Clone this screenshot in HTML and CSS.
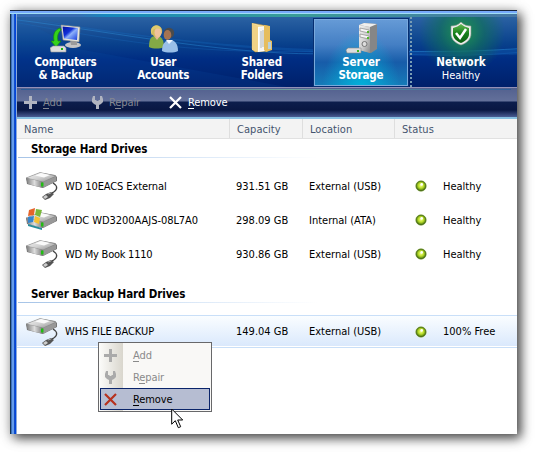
FILE: index.html
```html
<!DOCTYPE html>
<html lang="en">
<head>
<meta charset="utf-8">
<title>Server Storage</title>
<link rel="stylesheet" href="styles.css">
</head>
<body>
<svg class="defs" width="0" height="0">
  <defs>
    <linearGradient id="silver" x1="0" y1="0" x2="1" y2="1"><stop offset="0" stop-color="#f4f4f4"/><stop offset=".5" stop-color="#d2d2d2"/><stop offset="1" stop-color="#8b8b8b"/></linearGradient>
    <linearGradient id="front" x1="0" y1="0" x2="1" y2="0"><stop offset="0" stop-color="#777"/><stop offset=".5" stop-color="#ddd"/><stop offset="1" stop-color="#777"/></linearGradient>
    <linearGradient id="screen" x1="0" y1="0" x2="1" y2="1"><stop offset="0" stop-color="#0410a0"/><stop offset=".4" stop-color="#1030d8"/><stop offset=".55" stop-color="#8db0fa"/><stop offset="1" stop-color="#1238dc"/></linearGradient>
    <linearGradient id="folder" x1="0" y1="0" x2="1" y2="1"><stop offset="0" stop-color="#fff0b8"/><stop offset="1" stop-color="#dda93f"/></linearGradient>
    <linearGradient id="shield" x1="0" y1="0" x2="0" y2="1"><stop offset="0" stop-color="#63b954"/><stop offset=".5" stop-color="#168019"/><stop offset="1" stop-color="#0a5c12"/></linearGradient>
    <radialGradient id="orb" cx=".5" cy=".45" r=".55"><stop offset="0" stop-color="#f4ff8d"/><stop offset=".5" stop-color="#b8dc28"/><stop offset=".8" stop-color="#6c9718"/><stop offset="1" stop-color="#365c08"/></radialGradient>
    <symbol id="disk" viewBox="0 0 32 30">
      <path d="M0 7 14 1.5 29 4 31 6V10L17 17 1 13Z" fill="#777"/>
      <path d="M0 7 14 1.5 30 5 17 11Z" fill="url(#silver)" stroke="#8d8d8d" stroke-width=".5"/>
      <path d="M0 7 17 11V17L2 13Z" fill="url(#front)"/>
      <path d="M17 11 30 5.500V10L17 17Z" fill="#989898"/>
      <path d="M9 4.500 15 2 24 4 18 6.500Z" fill="#fafafa"/>
      <path d="M15 11.500h2.500v4h-2.500z" fill="#21bd12"/>
    </symbol>
    <symbol id="usb-drive" viewBox="0 0 32 30">
      <use href="#disk" width="32" height="30"/>
      <path d="M27 12c5 3 5 7-1 10" fill="none" stroke="#444" stroke-width="1.4"/>
      <path d="m16 26 4-3 5-2 3 2-4 4-5 2Z" fill="#555"/>
      <path d="m17 26 3-2 2 2-3 2Z" fill="#ccc"/><path d="m22 23 3-1" stroke="#aaa"/>
    </symbol>
    <symbol id="status" viewBox="0 0 12 12"><circle cx="6" cy="6" r="5.7" fill="#c9dda5"/><circle cx="6" cy="6" r="4.9" fill="url(#orb)" stroke="#496c13" stroke-width=".8"/><circle cx="6.7" cy="4.4" r="1.3" fill="#fff"/></symbol>
    <symbol id="plus" viewBox="0 0 13 13"><path d="M5 0h3v5h5v3H8v5H5V8H0V5h5z" fill="currentColor"/></symbol>
    <symbol id="wrench" viewBox="0 0 11 13"><path d="M1 0h2v4h1l1 1h1l1-1h1V0h2l1 3v3L9 8 7 9v4H4V9L2 8 0 6V3Z" fill="currentColor"/></symbol>
    <symbol id="cross" viewBox="0 0 13 13"><path d="m1 1 11 11M12 1 1 12" fill="none" stroke="currentColor" stroke-width="2.2"/></symbol>
  </defs>
</svg>

<main class="window">
  <nav class="nav">
    <svg class="waves" viewBox="0 0 500 73" preserveAspectRatio="none">
      <path d="M0 0C120 18 240 43 500 33V39C330 44 220 34 80 14Z" fill="#1b7bcf" opacity=".24"/>
      <path d="M0 3C100 16 220 42 320 38S430 38 500 33" fill="none" stroke="#2f97e3" opacity=".4"/>
      <path d="M0 6C70 18 150 37 270 36S410 45 500 37" fill="none" stroke="#1b77cc" opacity=".25"/>
      <path d="M60 33 270 73H0V0Z" fill="#1264bd" opacity=".12"/>
    </svg>
    <div class="tab">
      <svg class="pic" viewBox="0 0 32 32" width="32" height="32">
        <ellipse cx="23" cy="22" rx="8" ry="3" fill="#c5c5c5"/><path d="m20 17 7 1v4h-6z" fill="#9b9b9b"/>
        <path d="M11 2 30 4 29 19 13 17Z" fill="#e6e6db" stroke="#858585" stroke-width=".6"/>
        <path d="m12.5 3.5 15.5 1.5-1 12-13-1.5Z" fill="url(#screen)"/>
        <path d="M10 5C4 7 3 12 4 18H1l5 6 5-6H8c-1-5 0-8 3-11Z" fill="#34d21b" stroke="#188b08" stroke-width=".7"/>
        <path d="m0 25 3-2h11l2 2v4H1Z" fill="#ddd" stroke="#999" stroke-width=".6"/><path d="M11 25h2v2h-2z" fill="#1ab80a"/>
      </svg>
      <strong>Computers<br>&amp; Backup</strong>
    </div>
    <div class="tab">
      <svg class="pic" viewBox="0 0 32 32" width="32" height="32">
        <path d="M2 24c0-8 2-11 7-11s8 3 8 11c-4 2-11 2-15 0Z" fill="#83aa46"/>
        <path d="m7 13 3 4 3-4" fill="#e7b792"/><circle cx="9.5" cy="8" r="5.7" fill="#d3bd5d"/><ellipse cx="11" cy="9.5" rx="3.5" ry="4.8" fill="#efc29b"/><path d="M5 9c1-4 4-4 9-3-1-5-9-5-10 2v5Z" fill="#dfca6f"/>
        <path d="M15 28c0-7 3-11 8-11s8 4 8 11c-4 2-12 2-16 0Z" fill="#99bfe8"/>
        <path d="m19 17 3 4 4-4" fill="#f1f7ff"/><circle cx="22" cy="10" r="5.2" fill="#4b4b4b"/><ellipse cx="20.5" cy="12" rx="3.8" ry="5" fill="#a67351"/>
      </svg>
      <strong>User<br>Accounts</strong>
    </div>
    <div class="tab">
      <svg class="pic" viewBox="0 0 32 32" width="32" height="32">
        <path d="M6 0 22 3V28L9 29 6 26Z" fill="url(#folder)" stroke="#b88b32" stroke-width=".5"/>
        <path d="m12 4 8-1v25l-8 1Z" fill="#fff"/><path d="M14 9v18M16 7v20M18 9v17" stroke="#8d9499" stroke-width=".8"/>
        <path d="m18 2 6 1v14l2 1v9l-6 2-2-2Z" fill="#e6bd5c"/><path d="M6 0 12 3V29L6 27Z" fill="#f1d286"/>
        <path d="m13 5 5-1v23l-5 1Z" fill="#f5f5f2"/><path d="M15 8v17M17 7v17" stroke="#9aa0a4" stroke-width=".7"/>
        <path d="M22 19h3v7h-3z" fill="#b9d0da"/>
      </svg>
      <strong>Shared<br>Folders</strong>
    </div>
    <div class="tab active">
      <svg class="pic" viewBox="0 0 32 32" width="32" height="32">
        <path d="m14 2 5-2 13 1v25l-6 4-12-3Z" fill="#868686"/><path d="m14 2 11 2v26l-11-3Z" fill="url(#silver)"/><path d="m14 2 5-2 13 1-7 3Z" fill="#efefef"/>
        <path d="m15 5 9 2v3l-9-2Zm0 6 9 2v3l-9-2Z" fill="#f6f6f6" stroke="#8a8a8a" stroke-width=".7"/>
        <path d="M22 8h2v2h-2zm0 6h2v2h-2z" fill="#52b72c"/><circle cx="19.5" cy="21" r="2.5" fill="#ddd" stroke="#777"/>
        <path d="m1 27 2-2h13v5H2Z" fill="#ddd" stroke="#888" stroke-width=".6"/><path d="M12 27h2v2h-2z" fill="#3eb61e"/>
      </svg>
      <strong>Server<br>Storage</strong>
    </div>
    <div class="tab health">
      <svg class="pic" viewBox="0 0 32 32" width="32" height="32">
        <path d="M16 0c3 3 6 4 10 4v8c0 5-4 9-10 11C10 21 6 17 6 12V4c4 0 7-1 10-4Z" fill="#eee" stroke="#8b9b8b" stroke-width=".6"/>
        <path d="M16 2c2 2 5 3 8 4v6c0 4-3 7-8 9-5-2-8-5-8-9V6c3-1 6-2 8-4Z" fill="url(#shield)"/>
        <path d="m11 11 4 5 6-9" fill="none" stroke="#fff" stroke-width="2.5"/>
      </svg>
      <strong>Network</strong><span>Healthy</span>
    </div>
  </nav>

  <div class="toolbar">
    <span class="tool t-add off"><svg width="13" height="13"><use href="#plus"/></svg><span><u>A</u>dd</span></span>
    <span class="tool t-repair off"><svg width="11" height="13"><use href="#wrench"/></svg><span>R<u>e</u>pair</span></span>
    <span class="tool t-remove"><svg width="13" height="13"><use href="#cross"/></svg><span><u>R</u>emove</span></span>
  </div>

  <section class="content">
    <div class="head cols"><span>Name</span><span>Capacity</span><span>Location</span><span>Status</span></div>
    <h2>Storage Hard Drives</h2>
    <div class="rows">
      <div class="row cols"><span class="name"><svg width="32" height="30"><use href="#usb-drive"/></svg><span class="n1">WD 10EACS External</span></span><span>931.51 GB</span><span>External (USB)</span><span class="state"><svg width="12" height="12"><use href="#status"/></svg>Healthy</span></div>
      <div class="row cols"><span class="name"><svg viewBox="0 0 32 30" width="32" height="30"><g transform="translate(0 6)"><use href="#disk" width="32" height="30"/><path d="m2 13 14 4v2L2 15Z" fill="#278b9b"/></g><path d="m3 5 6-2-1 7-6 1Z" fill="#e5642a"/><path d="m10 4 6 1-2 7-5-2Z" fill="#79b83b"/><path d="m2 12 6-1-1 6-5 1Z" fill="#3685cc"/><path d="m9 11 5 2-1 6-5-2Z" fill="#f4c132"/></svg><span class="n2">WDC WD3200AAJS-08L7A0</span></span><span>298.09 GB</span><span>Internal (ATA)</span><span class="state"><svg width="12" height="12"><use href="#status"/></svg>Healthy</span></div>
      <div class="row cols"><span class="name"><svg width="32" height="30"><use href="#usb-drive"/></svg><span class="n3">WD My Book 1110</span></span><span>930.86 GB</span><span>External (USB)</span><span class="state"><svg width="12" height="12"><use href="#status"/></svg>Healthy</span></div>
    </div>
    <h2 class="backup">Server Backup Hard Drives</h2>
    <div class="row cols selected"><span class="name"><svg width="32" height="30"><use href="#usb-drive"/></svg><span class="n4">WHS FILE BACKUP</span></span><span>149.04 GB</span><span>External (USB)</span><span class="state"><svg width="12" height="12"><use href="#status"/></svg>100% Free</span></div>
  </section>
</main>

<div class="menu">
  <div class="item"><svg width="13" height="13"><use href="#plus"/></svg><span><u>A</u>dd</span></div>
  <div class="item"><svg width="13" height="13"><use href="#wrench"/></svg><span>R<u>e</u>pair</span></div>
  <div class="item hot"><svg width="13" height="13"><use href="#cross"/></svg><span><u>R</u>emove</span></div>
</div>
<svg class="cursor" width="13" height="21" viewBox="0 0 13 21"><path d="M.7 1v15.2l3.6-3.5 3 7 2.4-1-3-6.7h5Z" fill="#fff" stroke="#000" stroke-width="1"/></svg>
</body>
</html>
```

FILE: styles.css
```css
* { box-sizing: border-box; }
body {
  margin: 0;
  width: 535px;
  height: 452px;
  padding: 10px 0 0 10px;
  overflow: hidden;
  background: #fff;
  color: #000;
  font: 11px/13px "DejaVu Sans Condensed", "DejaVu Sans", sans-serif;
  font-stretch: condensed;
}
svg { display: block; flex: none; }
.defs { position: absolute; }
u { text-decoration: none; box-shadow: inset 0 -1px currentColor; }
.window {
  width: 507px;
  height: 424px;
  padding: 4px 0 0 7px;
  background:
    linear-gradient(#17243c 0 1px, #77a9fa 1px 3px, #a0def5 3px 4px) 0 0 / 100% 4px no-repeat,
    linear-gradient(90deg, #12334f 0 1px, #3d70bb 1px 2px, #659deb 2px 4px, #164dc6 4px 5px, #0047df 5px 6px, #8caad8 6px 7px);
  box-shadow: 4px 4px 10px rgba(0,0,0,.65), 1px 2px 14px rgba(0,0,0,.25);
}
.nav {
  position: relative;
  display: flex;
  height: 73px;
  border: 0 solid;
  border-top-width: 3px;
  border-image: linear-gradient(90deg, #396db4 0 12%, #1688bd 18%, #399d98 55%, #4777a5) 1;
  background: linear-gradient(#2b62a3, #09418c 38%, #002d83 60%, #00206a 100%);
}
.waves { position: absolute; inset: 0; width: 500px; height: 70px; }
.tab {
  position: relative;
  width: 98.5px;
  padding-top: 6px;
  display: flex;
  flex-direction: column;
  align-items: center;
  color: #fff;
  text-align: center;
}
.tab:first-of-type { width: 97px; }
.tab strong { margin-top: 1px; font-size: 11.5px; line-height: 13px; letter-spacing: -.15px; }
.tab.active {
  width: 94px;
  height: 67px;
  margin: 2px 2px 0 3px;
  padding-top: 3px;
  border: 1px solid #79a9dc;
  outline: 1px solid #062e71;
  background: radial-gradient(ellipse at 50% 110%, #00b4dc, transparent 60%), linear-gradient(#659ad6, #447fc4 38%, #175ca9 65%, #167bb8);
}
.health {
  flex: 1;
  padding-right: 7px;
  padding-top: 5px;
  border-left: 2px dotted #7a9db4;
  background: radial-gradient(circle at 50px 15px, #1f934f 0, rgba(17,113,87,.65) 22px, transparent 43px);
}
.tab.health strong { margin-top: 2px; letter-spacing: 0; }
.health span { line-height: 14px; }
.toolbar {
  display: flex;
  align-items: center;
  height: 32px;
  padding: 0 0 0 7px;
  border-top: 1px solid #9291b8;
  border-bottom: 2px solid #87bfe1;
  background: linear-gradient(90deg, #2a5b97, #6e9f9d 55%, #30609b) 4px 1px / 490px 1px no-repeat, linear-gradient(#53618f, #63709a 13px, #0c1d4c 14px, #091743 22px, #4a5c93 29px);
  color: #fff;
}
.tool { display: flex; align-items: center; gap: 6px; letter-spacing: -.1px; }
.off { color: #858892; }
.off svg { color: #b1b4c0; }
.t-add { width: 68px; }
.t-repair { width: 77px; }
.content { height: 315px; background: #fff; }
.cols { display: grid; grid-template-columns: 212px 73px 92px 1fr; align-items: center; }
.head { height: 20px; background: #f3f3f3; border-bottom: 1px solid #e1e1e1; color: #44536e; }
.head span { height: 19px; padding: 4px 0 0 7px; border-left: 1px solid #dedede; letter-spacing: .05px; }
.head span:first-child { border: 0; }
h2 {
  height: 19px;
  margin: 0;
  padding: 4px 0 0 14px;
  font-size: 11.5px;
  line-height: 13px;
  letter-spacing: -.12px;
  background: linear-gradient(90deg, #a6c4e7, #dce9f8 60%, #fff) 1px 100% / 300px 1px no-repeat;
}
.rows { padding-top: 11px; }
.row { height: 34px; }
.row > span { padding-left: 7px; }
.row .name { display: flex; align-items: center; gap: 7px; padding-left: 9px; }
.n1 { letter-spacing: -.1px; }
.n2, .n4 { letter-spacing: -.05px; }
.n3 { letter-spacing: -.25px; }
.row .state { display: flex; align-items: center; gap: 16px; padding-left: 21px; }
.backup { margin-top: 2px; height: 30px; padding-top: 15px; }
.selected { margin-top: 12px; height: 33px; border: 1px solid #c9dff8; border-width: 1px 0; box-shadow: inset 0 -1px #fff; background: linear-gradient(#fafdff, #d9e8fc); }
.menu {
  position: absolute;
  left: 98px;
  top: 342px;
  width: 114px;
  height: 70px;
  padding: 1px;
  border: 1px solid #68686a;
  background: linear-gradient(90deg, #fcfcfa, #d9d6cd 24px, #f9f8f6 24px);
}
.item { display: flex; align-items: center; gap: 16px; height: 22px; padding-left: 4px; color: #8a8a8a; letter-spacing: -.1px; }
.item svg { color: #aaa; }
.hot { border: 1px solid #0a246a; padding-left: 3px; background: #b6bdd2; color: #000; }
.hot svg { color: #b7311e; }
.cursor { position: absolute; left: 171px; top: 408px; }
```
